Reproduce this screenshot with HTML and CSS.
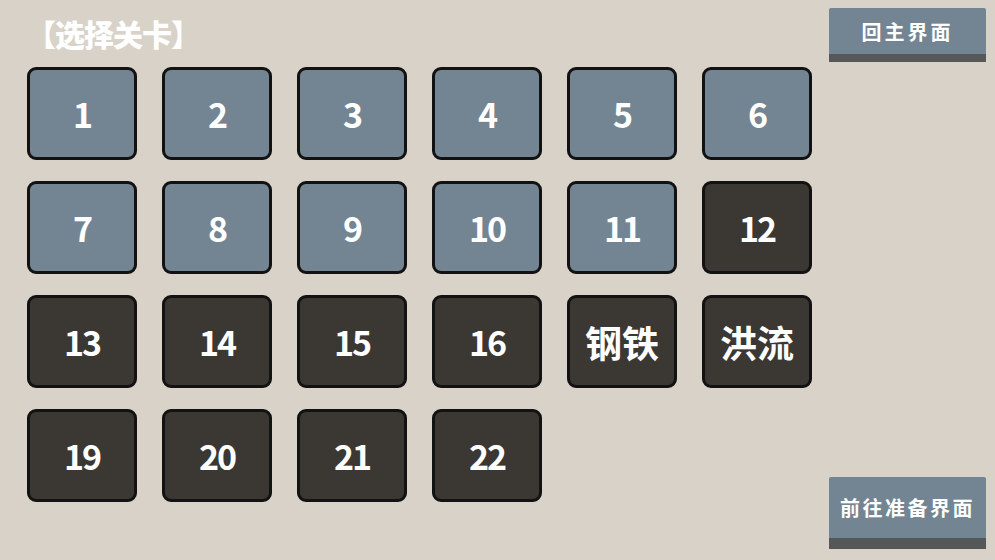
FILE: index.html
```html
<!DOCTYPE html>
<html lang="zh">
<head>
<meta charset="utf-8">
<title>选择关卡</title>
<link rel="stylesheet" href="styles.css">
</head>
<body>
<div class="page">
  <main class="main">
    <h1 class="title">【选择关卡】</h1>
    <div class="grid">
      <button class="tile open">1</button>
      <button class="tile open">2</button>
      <button class="tile open">3</button>
      <button class="tile open">4</button>
      <button class="tile open">5</button>
      <button class="tile open">6</button>
      <button class="tile open">7</button>
      <button class="tile open">8</button>
      <button class="tile open">9</button>
      <button class="tile open">10</button>
      <button class="tile open">11</button>
      <button class="tile locked">12</button>
      <button class="tile locked">13</button>
      <button class="tile locked">14</button>
      <button class="tile locked">15</button>
      <button class="tile locked">16</button>
      <button class="tile locked cjk">钢铁</button>
      <button class="tile locked cjk">洪流</button>
      <button class="tile locked">19</button>
      <button class="tile locked">20</button>
      <button class="tile locked">21</button>
      <button class="tile locked">22</button>
    </div>
  </main>
  <aside class="side">
    <button class="nav nav-top">回主界面</button>
    <button class="nav nav-bottom">前往准备界面</button>
  </aside>
</div>
</body>
</html>
```

FILE: styles.css
```css
* { box-sizing: border-box; }
html, body {
  margin: 0;
  padding: 0;
  width: 995px;
  height: 560px;
  overflow: hidden;
  background: #d8d2c8;
  font-family: "Noto Sans CJK SC", "Noto Sans", sans-serif;
}
.page {
  display: flex;
  justify-content: space-between;
  height: 560px;
  padding: 8px 9px 11px 27px;
}
.main {
  display: flex;
  flex-direction: column;
}
.title {
  margin: 7px 0 0 -1px;
  height: 36px;
  line-height: 36px;
  font-size: 30px;
  font-weight: 900;
  color: #ffffff;
  letter-spacing: -1px;
}
.grid {
  margin-top: 16px;
  display: grid;
  grid-template-columns: repeat(6, 110px);
  grid-auto-rows: 93px;
  column-gap: 25px;
  row-gap: 21px;
}
.tile {
  border: 3px solid #121212;
  border-radius: 9px;
  color: #ffffff;
  font-family: "Noto Sans CJK SC", sans-serif;
  font-size: 34px;
  font-weight: 700;
  display: flex;
  align-items: center;
  justify-content: center;
  padding: 0;
  letter-spacing: -2px;
}
.tile.open { background: #738592; }
.tile.locked { background: #3b3733; }
.tile.cjk { font-size: 37px; letter-spacing: 0; }
.side {
  width: 157px;
  display: flex;
  flex-direction: column;
  justify-content: space-between;
}
.nav {
  border: none;
  padding: 0;
  background: #738592;
  color: #ffffff;
  font-family: "Noto Sans CJK SC", sans-serif;
  font-weight: 700;
  font-size: 20px;
  letter-spacing: 3px;
  border-radius: 2px 2px 0 0;
}
.nav-top {
  height: 54px;
  border-bottom: 8px solid #555857;
}
.nav-bottom {
  height: 72px;
  border-bottom: 11px solid #555857;
  letter-spacing: 2.5px;
}
```
